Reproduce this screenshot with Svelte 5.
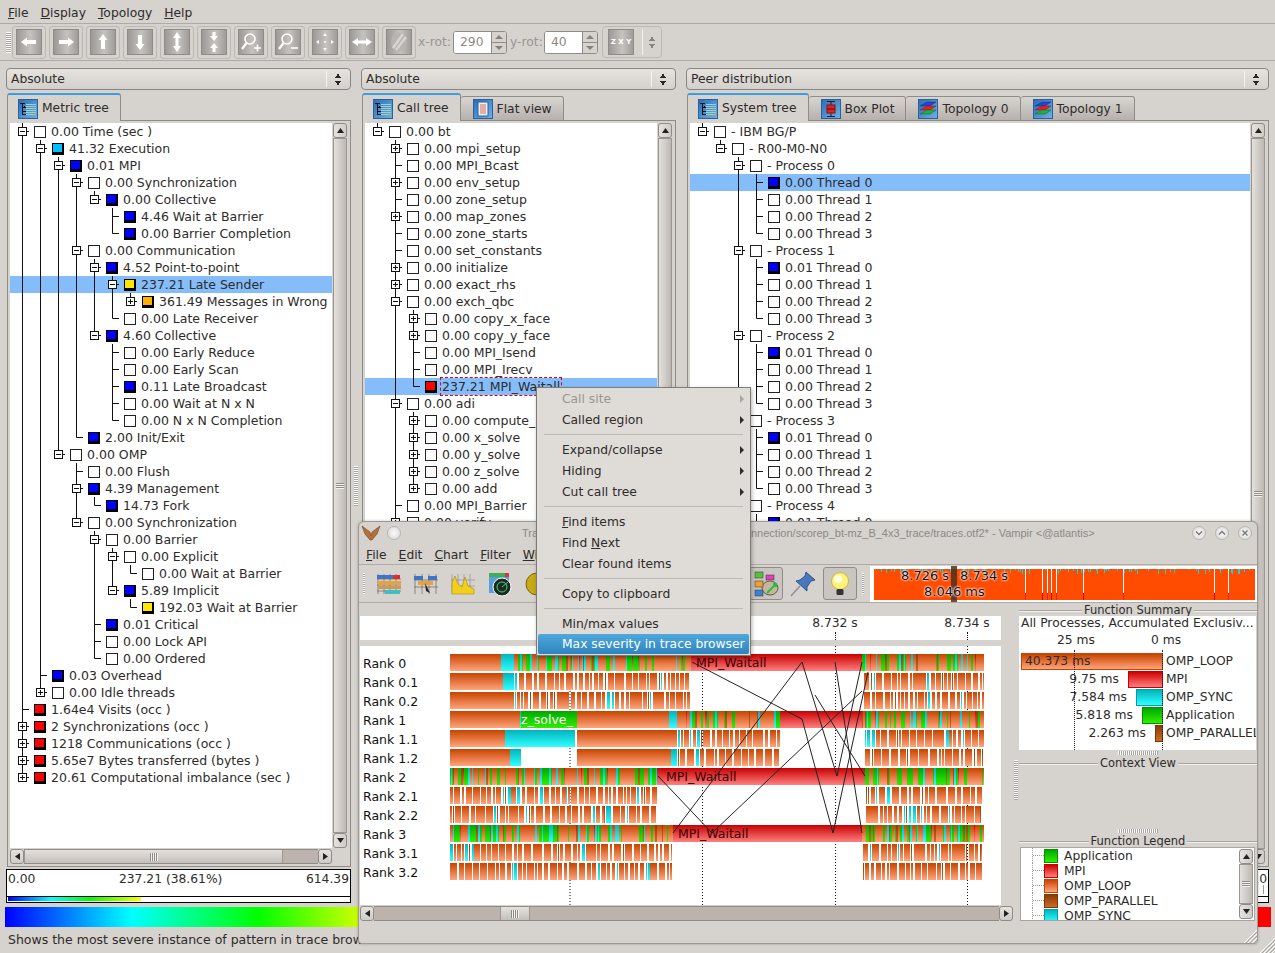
<script>
  const metricTree = [
    [0, "0.00 Time (sec )", "-", ""],
    [1, "41.32 Execution", "-", "#00bfff"],
    [2, "0.01 MPI", "-", "#0000ff"],
    [3, "0.00 Synchronization", "-", ""],
    [4, "0.00 Collective", "-", "#0000ff"],
    [5, "4.46 Wait at Barrier", "", "#0000ff"],
    [5, "0.00 Barrier Completion", "", "#0000ff"],
    [3, "0.00 Communication", "-", ""],
    [4, "4.52 Point-to-point", "-", "#0000ff"],
    [5, "237.21 Late Sender", "-", "#ffe600", "sel"],
    [6, "361.49 Messages in Wrong Order", "+", "#ffb000"],
    [5, "0.00 Late Receiver", "", ""],
    [4, "4.60 Collective", "-", "#0000ff"],
    [5, "0.00 Early Reduce", "", ""],
    [5, "0.00 Early Scan", "", ""],
    [5, "0.11 Late Broadcast", "", "#0000ff"],
    [5, "0.00 Wait at N x N", "", ""],
    [5, "0.00 N x N Completion", "", ""],
    [3, "2.00 Init/Exit", "", "#0000ff"],
    [2, "0.00 OMP", "-", ""],
    [3, "0.00 Flush", "", ""],
    [3, "4.39 Management", "-", "#0000ff"],
    [4, "14.73 Fork", "", "#0000ff"],
    [3, "0.00 Synchronization", "-", ""],
    [4, "0.00 Barrier", "-", ""],
    [5, "0.00 Explicit", "-", ""],
    [6, "0.00 Wait at Barrier", "", ""],
    [5, "5.89 Implicit", "-", "#0000ff"],
    [6, "192.03 Wait at Barrier", "", "#ffe600"],
    [4, "0.01 Critical", "", "#0000ff"],
    [4, "0.00 Lock API", "", ""],
    [4, "0.00 Ordered", "", ""],
    [1, "0.03 Overhead", "", "#0000ff"],
    [1, "0.00 Idle threads", "+", ""],
    [0, "1.64e4 Visits (occ )", "", "#ff0000"],
    [0, "2 Synchronizations (occ )", "+", "#ff0000"],
    [0, "1218 Communications (occ )", "+", "#ff0000"],
    [0, "5.65e7 Bytes transferred (bytes )", "+", "#ff0000"],
    [0, "20.61 Computational imbalance (sec )", "+", "#ff0000"],
  ];

  const callTree = [
    [0, "0.00 bt", "-", ""],
    [1, "0.00 mpi_setup", "+", ""],
    [1, "0.00 MPI_Bcast", "", ""],
    [1, "0.00 env_setup", "+", ""],
    [1, "0.00 zone_setup", "", ""],
    [1, "0.00 map_zones", "+", ""],
    [1, "0.00 zone_starts", "", ""],
    [1, "0.00 set_constants", "", ""],
    [1, "0.00 initialize", "+", ""],
    [1, "0.00 exact_rhs", "+", ""],
    [1, "0.00 exch_qbc", "-", ""],
    [2, "0.00 copy_x_face", "+", ""],
    [2, "0.00 copy_y_face", "+", ""],
    [2, "0.00 MPI_Isend", "", ""],
    [2, "0.00 MPI_Irecv", "", ""],
    [2, "237.21 MPI_Waitall", "", "#ff0000", "sel focus"],
    [1, "0.00 adi", "-", ""],
    [2, "0.00 compute_rhs", "+", ""],
    [2, "0.00 x_solve", "+", ""],
    [2, "0.00 y_solve", "+", ""],
    [2, "0.00 z_solve", "+", ""],
    [2, "0.00 add", "+", ""],
    [1, "0.00 MPI_Barrier", "", ""],
    [1, "0.00 verify", "+", ""],
    [1, "0.00 MPI_Finalize", "", ""],
  ];

  const systemTree = [
    [0, "- IBM BG/P", "-", ""],
    [1, "- R00-M0-N0", "-", ""],
  ];
  for (let p = 0; p < 5; p++) {
    systemTree.push([2, `- Process ${p}`, "-", ""]);
    for (let t = 0; t < 4; t++) {
      const first = t === 0;
      systemTree.push([
        3,
        `${first && p > 0 ? "0.01" : "0.00"} Thread ${t}`,
        "",
        first ? "#0000ff" : "",
        first && p === 0 ? "sel" : "",
      ]);
    }
  }

  // works out which guide lines each row needs from the depth column only
  function layoutTree(list) {
    return list.map(([depth, text, expander, color, flags], i) => {
      const hasSibling = (level) => {
        for (let j = i + 1; j < list.length; j++) {
          if (list[j][0] < level) return false;
          if (list[j][0] === level) return true;
        }
        return false;
      };
      const guides = [];
      for (let k = 0; k < depth; k++) guides.push(hasSibling(k));
      return {
        text,
        expander,
        color,
        guides,
        last: !hasSibling(depth),
        selected: (flags || "").includes("sel"),
        focused: (flags || "").includes("focus"),
      };
    });
  }

  const panels = [
    {
      mode: "Absolute",
      tabs: [["Metric tree", "tree", true]],
      rows: layoutTree(metricTree),
      hbar: true,
      value: ["0.00", "237.21 (38.61%)", "614.39"],
      scale: 133,
    },
    {
      mode: "Absolute",
      tabs: [
        ["Call tree", "tree", true],
        ["Flat view", "flat", false],
      ],
      rows: layoutTree(callTree),
      hbar: false,
      value: ["0.00", "", "614.39"],
      scale: 0,
    },
    {
      mode: "Peer distribution",
      tabs: [
        ["System tree", "tree", true],
        ["Box Plot", "box", false],
        ["Topology 0", "topo", false],
        ["Topology 1", "topo", false],
      ],
      rows: layoutTree(systemTree),
      hbar: false,
      value: ["0.00", "", "0.010"],
      scale: 0,
    },
  ];

  const toolIcons = ["left", "right", "up", "down", "updown", "squeeze", "zoomin", "zoomout", "center", "horiz", "slash"];

  const menuItems = [
    { label: "Call site", arrow: true, disabled: true },
    { label: "Called region", arrow: true },
    null,
    { label: "Expand/collapse", arrow: true },
    { label: "Hiding", arrow: true },
    { label: "Cut call tree", arrow: true },
    null,
    { pre: "", key: "F", post: "ind items" },
    { pre: "Find ", key: "N", post: "ext" },
    { label: "Clear found items" },
    null,
    { label: "Copy to clipboard" },
    null,
    { label: "Min/max values" },
    { label: "Max severity in trace browser", active: true },
  ];

  function makeRng(seed) {
    let s = seed;
    return () => (s = (s * 16807) % 2147483647) / 2147483647;
  }

  function stripes(x0, x1, kind, r) {
    const out = [];
    let x = x0;
    while (x < x1) {
      const p = r();
      let w, fill;
      if (kind === "mix") {
        if (p < 0.38) [w, fill] = [2 + Math.floor(r() * 4), "loop"];
        else if (p < 0.74) [w, fill] = [1 + Math.floor(r() * 2), "app"];
        else if (p < 0.88) [w, fill] = [1 + Math.floor(r() * 2), "sync"];
        else if (p < 0.96) [w, fill] = [1 + Math.floor(r() * 2), "par"];
        else [w, fill] = [1, "mpi"];
      } else {
        if (p < 0.8) [w, fill] = [2 + Math.floor(r() * 6), "loop"];
        else if (p < 0.93) [w, fill] = [1 + Math.floor(r() * 3), "sync"];
        else [w, fill] = [1, "par"];
      }
      w = Math.min(w, x1 - x);
      out.push({ x, w, fill });
      x += w;
      if (kind === "gap" && r() < 0.9) x += 1 + Math.floor(r() * 2);
    }
    return out;
  }

  const rankRows = [
    ["Rank 0", [[450, 501, "loop"], [501, 514, "sync"], [514, 691, "mix"], [691, 862, "mpi"], [862, 984, "mix"]]],
    ["Rank 0.1", [[450, 503, "loop"], [503, 514, "sync"], [515, 690, "gap"], [864, 984, "gap"]]],
    ["Rank 0.2", [[450, 514, "loop"], [515, 690, "gap"], [864, 984, "gap"]]],
    ["Rank 1", [[450, 520, "loop"], [520, 521, "sync"], [521, 577, "app"], [577, 669, "loop"], [669, 677, "sync"], [677, 780, "mix"], [780, 862, "mpi"], [862, 984, "mix"]]],
    ["Rank 1.1", [[450, 505, "loop"], [505, 575, "sync"], [577, 677, "loop"], [678, 780, "gap"], [865, 984, "gap"]]],
    ["Rank 1.2", [[450, 510, "loop"], [510, 521, "sync"], [577, 671, "loop"], [671, 677, "sync"], [678, 780, "gap"], [865, 984, "gap"]]],
    ["Rank 2", [[450, 657, "mix"], [657, 865, "mpi"], [865, 984, "mix"]]],
    ["Rank 2.1", [[450, 657, "gap"], [866, 982, "gap"]]],
    ["Rank 2.2", [[450, 657, "gap"], [866, 982, "gap"]]],
    ["Rank 3", [[450, 673, "mix"], [673, 862, "mpi"], [862, 984, "mix"]]],
    ["Rank 3.1", [[450, 672, "gap"], [863, 982, "gap"]]],
    ["Rank 3.2", [[450, 672, "gap"], [863, 982, "gap"]]],
  ];

  const rng = makeRng(4711);
  const timeline = rankRows.map(([name, runs], i) => {
    const segs = [];
    for (const [a, b, kind] of runs) {
      if (kind === "mix" || kind === "gap") segs.push(...stripes(a, b, kind, rng));
      else segs.push({ x: a, w: b - a, fill: kind });
    }
    return { name, y: 654 + i * 19, segs };
  });

  const barLabels = [
    ["MPI_Waitall", 696, 667],
    ["MPI_Waitall", 666, 781],
    ["MPI_Waitall", 678, 838],
  ];

  const messages = [
    "M692 662 L802 719 L833 833 L868 672",
    "M673 833 L802 662 L837 776 L862 662",
    "M658 776 L712 833 L862 691",
    "M835 662 L862 833",
    "M815 695 L865 776",
  ];

  const ticks = [];
  {
    const r = makeRng(99);
    for (let x = 873; x < 1252; x += 1 + Math.floor(r() * 7)) {
      ticks.push({ x, h: 1 + Math.floor(r() * 5), c: r() < 0.75 ? "#22d0d0" : "#c85a20" });
    }
  }
  const longTicks = [1023, 1040, 1045, 1049, 1054, 1081, 1121, 1212, 1226];

  const summary = [
    { name: "OMP_LOOP", value: "40.373 ms", width: 142, cls: "loop", inside: true },
    { name: "MPI", value: "9.75 ms", width: 35, cls: "mpi" },
    { name: "OMP_SYNC", value: "7.584 ms", width: 27, cls: "sync" },
    { name: "Application", value: "5.818 ms", width: 21, cls: "app" },
    { name: "OMP_PARALLEL", value: "2.263 ms", width: 8, cls: "par" },
  ];

  const legend = [
    ["Application", "app"],
    ["MPI", "mpi"],
    ["OMP_LOOP", "loop"],
    ["OMP_PARALLEL", "par"],
    ["OMP_SYNC", "sync"],
  ];

  const vampirLeft = ["timeline", "process", "counter", "radar", "pie"];
</script>

{#snippet arrowUp()}
  <svg width="9" height="7" viewBox="0 0 9 7"><path d="M4.5 1 L8 6 H1 Z" fill="#222" /></svg>
{/snippet}

{#snippet arrowDown()}
  <svg width="9" height="7" viewBox="0 0 9 7"><path d="M1 1 H8 L4.5 6 Z" fill="#222" /></svg>
{/snippet}

{#snippet vbar()}
  <div class="vbar">
    <div class="sb-btn">{@render arrowUp()}</div>
    <div class="vbar-thumb"><span class="thumb-grip"></span></div>
    <div class="sb-btn">{@render arrowDown()}</div>
  </div>
{/snippet}

{#snippet hbar(before, thumb)}
  <div class="hbar">
    <div class="sb-btn"><svg width="7" height="9" viewBox="0 0 7 9"><path d="M1 4.5 L6 1 V8 Z" fill="#222" /></svg></div>
    <div class="hbar-track">
      <span style="width:{before}px"></span>
      <div class="hbar-thumb" style="width:{thumb}px"><span class="thumb-grip-v"></span></div>
    </div>
    <div class="sb-btn"><svg width="7" height="9" viewBox="0 0 7 9"><path d="M1 1 L6 4.5 L1 8 Z" fill="#222" /></svg></div>
  </div>
{/snippet}

{#snippet tabIcon(kind)}
  <svg class="tab-icon" width="20" height="20" viewBox="0 0 20 20">
    <defs>
      <linearGradient id="tabBlue" x1="0" y1="0" x2="1" y2="1">
        <stop offset="0" stop-color="#2a6db5" />
        <stop offset="1" stop-color="#6db2e4" />
      </linearGradient>
    </defs>
    <rect x="0.5" y="0.5" width="19" height="19" fill="url(#tabBlue)" stroke="#2b5f9e" />
    {#if kind === "tree"}
      <path d="M2 4.5 H6.5 M4.5 4.5 V15.5 H8 M4.5 8.5 H8 M4.5 12.5 H8 M6.5 6.5 V9" stroke="#111" fill="none" shape-rendering="crispEdges" />
      <path d="M8 5.5 H18 M8 7.5 H18 M8 9.5 H18 M8 11.5 H18 M8 13.5 H18 M8 15.5 H15" stroke="#9fd2c4" fill="none" shape-rendering="crispEdges" />
      <path d="M15 15.5 H18" stroke="#e0b040" shape-rendering="crispEdges" />
    {:else if kind === "flat"}
      <rect x="5" y="3" width="10" height="14" fill="#e9f1f8" stroke="#2b5f9e" />
      <path d="M7 6 H13 M7 8 H13 M7 10 H13 M7 12 H13 M7 14 H13" stroke="#e06a50" />
    {:else if kind === "box"}
      <path d="M10 2 V18 M6 2.5 H14 M6 17.5 H14" stroke="#222" />
      <rect x="6" y="6" width="8" height="8" fill="#ee1c1c" stroke="#8a1010" />
      <path d="M6 10 H14" stroke="#222" />
    {:else}
      <path d="M2 7 L9 3 H18 L12 7 Z" fill="#2b3fd0" stroke="#182a80" stroke-width="0.5" />
      <path d="M2 11 L9 7 H18 L12 11 Z" fill="#e22222" stroke="#801818" stroke-width="0.5" />
      <path d="M2 15 L9 11 H18 L12 15 Z" fill="#22b040" stroke="#146020" stroke-width="0.5" />
    {/if}
  </svg>
{/snippet}

{#snippet toolGlyph(kind)}
  <svg width="24" height="24" viewBox="0 0 24 24">
    <g fill="#fff" stroke="none">
      {#if kind === "left"}
        <path d="M4 12 L10 7.5 V10 H19 V14 H10 V16.5 Z" />
      {:else if kind === "right"}
        <path d="M20 12 L14 7.5 V10 H5 V14 H14 V16.5 Z" />
      {:else if kind === "up"}
        <path d="M12 4 L7.5 10 H10 V19 H14 V10 H16.5 Z" />
      {:else if kind === "down"}
        <path d="M12 20 L7.5 14 H10 V5 H14 V14 H16.5 Z" />
      {:else if kind === "updown"}
        <path d="M12 2 L8 8 H10.5 V16 H8 L12 22 L16 16 H13.5 V8 H16 Z" />
      {:else if kind === "squeeze"}
        <path d="M12 11 L8 6 H10.5 V2 H13.5 V6 H16 Z M12 13 L8 18 H10.5 V22 H13.5 V18 H16 Z" />
      {:else if kind === "horiz"}
        <path d="M2 12 L8 8 V10.5 H16 V8 L22 12 L16 16 V13.5 H8 V16 Z" />
      {:else if kind === "center"}
        <path d="M12 3 L14 6 H10 Z M12 21 L14 18 H10 Z M3 12 L6 10 V14 Z M21 12 L18 10 V14 Z" />
        <circle cx="12" cy="12" r="1" />
      {:else if kind === "zoomin" || kind === "zoomout"}
        <circle cx="11" cy="9" r="5" fill="none" stroke="#fff" stroke-width="1.6" />
        <path d="M7.5 13 L3 19" stroke="#fff" stroke-width="2.4" />
        {#if kind === "zoomin"}
          <path d="M15 18 H22 M18.5 14.5 V21.5" stroke="#fff" stroke-width="1.6" />
        {:else}
          <path d="M15 18 H22" stroke="#fff" stroke-width="1.6" />
        {/if}
      {:else}
        <ellipse cx="12" cy="12" rx="8" ry="9.5" fill="#b8b4b0" />
        <path d="M6 18 L16 4 M9 20 L19 7" stroke="#d8d5d2" stroke-width="2.4" />
      {/if}
    </g>
  </svg>
{/snippet}

{#snippet vampirIcon(kind)}
  <svg class="v-icon" width="28" height="28" viewBox="0 0 28 28">
    {#if kind === "timeline"}
      <path d="M3 4 V24 M9 4 V24 M15 4 V24 M21 4 V24 M2 9 H26 M2 15 H26 M2 21 H26" stroke="#555" stroke-width="0.6" />
      <rect x="2" y="5" width="18" height="4" fill="#3f74c8" /><rect x="18" y="5" width="7" height="4" fill="#e02c2c" />
      <rect x="3" y="11" width="23" height="4" fill="#e8a23c" /><rect x="3" y="16" width="23" height="3" fill="#c89a60" />
      <rect x="10" y="20" width="15" height="4" fill="#3ec0c0" />
    {:else if kind === "process"}
      <path d="M3 4 V24 M10 4 V24 M17 4 V24 M24 4 V24 M2 10 H26 M2 17 H26" stroke="#555" stroke-width="0.6" />
      <rect x="2" y="6" width="9" height="4" fill="#3f74c8" /><rect x="16" y="6" width="9" height="4" fill="#3f74c8" />
      <rect x="6" y="11" width="15" height="4" fill="#e8a23c" />
      <path d="M13 13 L18 23 L14 21 Z" fill="#222" />
    {:else if kind === "counter"}
      <path d="M3 4 V24 M9 4 V24 M15 4 V24 M21 4 V24 M2 10 H26 M2 16 H26" stroke="#888" stroke-width="0.6" />
      <path d="M3 24 V13 L6 6 L9 14 L13 17 L16 7 L19 16 L25 19 V24 Z" fill="#f2cf1e" stroke="#a58a10" stroke-width="0.6" />
    {:else if kind === "radar"}
      <rect x="3" y="3" width="20" height="20" fill="#5aa0d8" />
      <rect x="3" y="3" width="20" height="4" fill="#3fae55" /><rect x="19" y="3" width="4" height="4" fill="#d83838" />
      <circle cx="16" cy="17" r="9" fill="#1b2b22" stroke="#fff" />
      <circle cx="16" cy="17" r="5" fill="none" stroke="#4fd07a" />
      <path d="M16 17 L22 12" stroke="#4fd07a" />
    {:else if kind === "pie"}
      <circle cx="14" cy="14" r="11" fill="#c8a818" stroke="#7a6410" />
      <path d="M14 14 L14 4 A10 10 0 0 1 22 9 Z" fill="#2a2a10" />
    {:else if kind === "palette"}
      <ellipse cx="18" cy="18" rx="8" ry="7" fill="#c7b79a" stroke="#6a5c44" />
      <rect x="3" y="2" width="8" height="6" fill="#54c23e" stroke="#333" stroke-width="0.5" />
      <rect x="14" y="5" width="8" height="5" fill="#e040c0" stroke="#333" stroke-width="0.5" />
      <rect x="3" y="11" width="8" height="6" fill="#f0a030" stroke="#333" stroke-width="0.5" />
      <rect x="3" y="20" width="8" height="6" fill="#3f80d0" stroke="#333" stroke-width="0.5" />
      <path d="M15 23 L24 14 M21 14 H24 V17" stroke="#22c040" stroke-width="2" fill="none" />
    {:else if kind === "pin"}
      <path d="M17 2 L26 10 L22 11 L18 17 L18 21 L7 11 L11 10 L16 6 Z" fill="#4a78c0" stroke="#23406e" stroke-width="0.8" />
      <path d="M11 16 L2 26" stroke="#8a8f98" stroke-width="1.4" />
    {:else}
      <circle cx="14" cy="11" r="8.5" fill="#fff27a" stroke="#c8b840" />
      <circle cx="12" cy="9" r="4" fill="#fffde0" />
      <rect x="10.5" y="19" width="7" height="6" rx="1.5" fill="#333" />
    {/if}
  </svg>
{/snippet}

{#snippet treeRow(row)}
  <div class="row" class:selected={row.selected}>
    {#each row.guides as on}
      <span class="guide" class:on></span>
    {/each}
    <svg class="elbow" width="18" height="17" viewBox="0 0 18 17">
      <path d={row.last ? "M9.5 0 V8.5 H16" : "M9.5 0 V17 M9.5 8.5 H16"} stroke="#111" fill="none" />
      {#if row.expander}
        <rect x="5.5" y="4.5" width="8" height="8" fill="#fff" stroke="#111" />
        <path d={row.expander === "+" ? "M7 8.5 H12 M9.5 6 V11" : "M7 8.5 H12"} stroke="#111" />
      {/if}
    </svg>
    <span class="swatch" class:filled={row.color} style:--fill={row.color || "#fff"}></span>
    <span class="label" class:focused={row.focused}>{row.text}</span>
  </div>
{/snippet}

<div class="app">
  <nav class="menubar">
    <span><u>F</u>ile</span>
    <span><u>D</u>isplay</span>
    <span><u>T</u>opology</span>
    <span><u>H</u>elp</span>
  </nav>

  <div class="toolbar">
    <span class="grip-v"></span>
    <div class="tools">
      {#each toolIcons as kind}
        <button type="button" class="tool"><span class="face">{@render toolGlyph(kind)}</span></button>
      {/each}
    </div>
    <label class="rot" for="xrot">x-rot:</label>
    <div class="spin">
      <input id="xrot" value="290" />
      <div class="spin-btns"><span class="up"></span><span class="down"></span></div>
    </div>
    <label class="rot rot-y" for="yrot">y-rot:</label>
    <div class="spin">
      <input id="yrot" value="40" />
      <div class="spin-btns"><span class="up"></span><span class="down"></span></div>
    </div>
    <div class="zxy">
      <span class="face zxy-face">Z X Y</span>
      <span class="zxy-div"></span>
      <span class="stack gray"></span>
    </div>
  </div>

  <main class="panels">
    {#each panels as panel, i}
      {#if i > 0}
        <div class="splitter"><span class="grip-v"></span></div>
      {/if}
      <section class="panel">
        <div class="combo">
          <span class="combo-text">{panel.mode}</span>
          <span class="combo-div"></span>
          <span class="stack"></span>
        </div>
        <div class="tabs">
          {#each panel.tabs as [name, kind, active]}
            <div class="tab" class:active>
              {@render tabIcon(kind)}
              <span>{name}</span>
            </div>
          {/each}
        </div>
        <div class="frame">
          <div class="tree-wrap">
            <div class="tree">
              {#each panel.rows as row}
                {@render treeRow(row)}
              {/each}
            </div>
            {@render vbar()}
          </div>
          {#if panel.hbar}
            <div class="frame-hbar">{@render hbar(0, 259)}</div>
          {/if}
        </div>
        <div class="value-box">
          <div class="value-text">
            <span>{panel.value[0]}</span>
            <span>{panel.value[1]}</span>
            <span>{panel.value[2]}</span>
          </div>
          {#if i === 2}<span class="value-mark"></span>{/if}
          <div class="value-scale">
            {#if panel.scale}<span style="width:{panel.scale}px"></span>{/if}
          </div>
        </div>
      </section>
    {/each}
  </main>

  <div class="spectrum"></div>
  <footer class="status">Shows the most severe instance of pattern in trace browser</footer>
  <svg class="size-grip outer" width="16" height="16" viewBox="0 0 16 16">
    <path d="M16 1 L1 16 M16 5 L5 16 M16 9 L9 16 M16 13 L13 16" stroke="#fff" />
    <path d="M16 3 L3 16 M16 7 L7 16 M16 11 L11 16" stroke="#a8a4a0" />
  </svg>

  <!-- second application window lying over the first one -->
  <div class="vampir">
    <header class="v-title">
      <svg class="v-logo" width="20" height="16" viewBox="0 0 20 16">
        <path d="M1 1 L9 7 L10 11 L11 7 L19 1 L16 9 L11 15 H9 L4 9 Z" fill="#b5703a" stroke="#6e4526" stroke-width="0.6" />
      </svg>
      <span class="v-circle"></span>
      <span class="v-head">Trace View</span>
      <span class="v-tail">nnection/scorep_bt-mz_B_4x3_trace/traces.otf2* - Vampir &lt;@atlantis&gt;</span>
      <span class="v-winbtns">
        <span class="v-circle"><svg width="10" height="10" viewBox="0 0 10 10"><path d="M2 3.5 L5 6.5 L8 3.5" stroke="#777" stroke-width="1.4" fill="none" /></svg></span>
        <span class="v-circle"><svg width="10" height="10" viewBox="0 0 10 10"><path d="M2 6.5 L5 3.5 L8 6.5" stroke="#777" stroke-width="1.4" fill="none" /></svg></span>
        <span class="v-circle"><svg width="10" height="10" viewBox="0 0 10 10"><path d="M2.5 2.5 L7.5 7.5 M7.5 2.5 L2.5 7.5" stroke="#777" stroke-width="1.4" fill="none" /></svg></span>
      </span>
    </header>
    <nav class="v-menu">
      <span><u>F</u>ile</span>
      <span><u>E</u>dit</span>
      <span><u>C</u>hart</span>
      <span><u>F</u>ilter</span>
      <span><u>W</u>indow</span>
      <span><u>H</u>elp</span>
    </nav>
    <div class="v-toolbar">
      <span class="grip-v"></span>
      <div class="v-tools">
        {#each vampirLeft as kind}
          {@render vampirIcon(kind)}
        {/each}
      </div>
      <div class="v-tools-right">
        <span class="pressed">{@render vampirIcon("palette")}</span>
        <span class="plain">{@render vampirIcon("pin")}</span>
        <span class="pressed">{@render vampirIcon("bulb")}</span>
      </div>
      <span class="grip-v v-grip"></span>
      <div class="mini">
        <svg width="387" height="36" viewBox="868 568 387 36">
          <rect x="872" y="571" width="381" height="31" fill="#ff4c00" />
          {#each ticks as t}
            <rect x={t.x} y="571" width="1" height={t.h} fill={t.c} />
          {/each}
          {#each longTicks as x, i}
            <rect x={x} y="571" width="1" height="24" fill="#fff" />
            <rect x={x} y="595" width="1" height="7" fill={i % 2 ? "#e00000" : "#f02020"} />
          {/each}
          <rect x="949" y="568" width="6" height="36" fill="#503020" opacity="0.85" />
        </svg>
        <span class="mini-a">8.726 s</span>
        <span class="mini-b">8.734 s</span>
        <span class="mini-c">8.046 ms</span>
      </div>
    </div>

    <div class="v-body">
      <div class="chart">
        <div class="ruler">
          <span class="rlabel r1">8.732 s</span>
          <span class="rlabel r2">8.734 s</span>
          <span class="rdots d1"></span>
          <span class="rdots d2"></span>
        </div>
        <svg class="timeline" width="641" height="259" viewBox="360 646 641 259">
          <defs>
            <linearGradient id="g-loop" x1="0" y1="0" x2="0" y2="1"><stop offset="0" stop-color="#c84400" /><stop offset="1" stop-color="#ffa47c" /></linearGradient>
            <linearGradient id="g-mpi" x1="0" y1="0" x2="0" y2="1"><stop offset="0" stop-color="#c80000" /><stop offset="1" stop-color="#ff8080" /></linearGradient>
            <linearGradient id="g-sync" x1="0" y1="0" x2="0" y2="1"><stop offset="0" stop-color="#00b4bc" /><stop offset="1" stop-color="#30ffff" /></linearGradient>
            <linearGradient id="g-app" x1="0" y1="0" x2="0" y2="1"><stop offset="0" stop-color="#00a800" /><stop offset="1" stop-color="#30ee00" /></linearGradient>
            <linearGradient id="g-par" x1="0" y1="0" x2="0" y2="1"><stop offset="0" stop-color="#8a3c08" /><stop offset="1" stop-color="#d06a20" /></linearGradient>
          </defs>
          {#each [570, 702.5, 835.5, 967.5] as x}
            <path d="M{x} 646 V905" stroke="#111" stroke-dasharray="1 2" />
          {/each}
          {#each timeline as rank}
            <text class="rank" x="363" y={rank.y + 14}>{rank.name}</text>
            {#each rank.segs as s}
              <rect x={s.x} y={rank.y} width={s.w} height="17" fill="url(#g-{s.fill})" shape-rendering="crispEdges" />
            {/each}
          {/each}
          {#each barLabels as [text, x, y]}
            <text class="rank dark" x={x} y={y}>{text}</text>
          {/each}
          <text class="rank light" x="521" y="724">z_solve_</text>
          {#each messages as d}
            <path {d} fill="none" stroke="#222" />
          {/each}
        </svg>
        <div class="chart-hbar">{@render hbar(126, 30)}</div>
      </div>

      <span class="dock-grip"><span class="grip-v"></span></span>

      <aside class="side">
        <div class="group-title"><span>Function Summary</span></div>
        <div class="summary">
          <div class="sum-head">All Processes, Accumulated Exclusiv...</div>
          <div class="sum-axis"><span>25 ms</span><span>0 ms</span></div>
          {#each summary as s}
            <div class="sum-row">
              <div class="sum-zone">
                {#if s.inside}
                  <div class="bar {s.cls}" style="width:{s.width}px">{s.value}</div>
                {:else}
                  <span>{s.value}</span>
                  <div class="bar {s.cls}" style="width:{s.width}px"></div>
                {/if}
              </div>
              <span class="sum-name">{s.name}</span>
            </div>
          {/each}
          <span class="axis-line a"></span>
          <span class="axis-line b"></span>
        </div>
        <div class="side-grip"><span class="grip-h"></span></div>
        <div class="group-title"><span>Context View</span></div>
        <div class="context"></div>
        <div class="side-grip"><span class="grip-h"></span></div>
        <div class="group-title"><span>Function Legend</span></div>
        <div class="legend">
          <div class="legend-list">
            {#each legend as [name, cls]}
              <div class="legend-row">
                <span class="legend-dots"></span>
                <span class="chip bar {cls}"></span>
                <span>{name}</span>
              </div>
            {/each}
          </div>
          <div class="legend-bar">{@render vbar()}</div>
        </div>
      </aside>
    </div>
    <svg class="size-grip" width="14" height="14" viewBox="0 0 14 14">
      <path d="M14 1 L1 14 M14 5 L5 14 M14 9 L9 14" stroke="#fff" />
      <path d="M14 3 L3 14 M14 7 L7 14 M14 11 L11 14" stroke="#a8a4a0" />
    </svg>
  </div>

  <div class="context-menu">
    {#each menuItems as item}
      {#if item === null}
        <div class="sep"></div>
      {:else}
        <div class="item" class:disabled={item.disabled} class:active={item.active}>
          {#if item.label}
            <span>{item.label}</span>
          {:else}
            <span>{item.pre}<u>{item.key}</u>{item.post}</span>
          {/if}
          {#if item.arrow}<span class="tri"></span>{/if}
        </div>
      {/if}
    {/each}
  </div>
</div>

<style>
  :global(body) {
    margin: 0;
    background: #d6d2ce;
  }

  .app {
    position: relative;
    width: 1275px;
    height: 953px;
    overflow: hidden;
    display: flex;
    flex-direction: column;
    background: #d6d2ce;
    font-family: "DejaVu Sans", sans-serif;
    font-size: 12.3px;
    color: #2e2c2a;
  }

  .menubar {
    box-sizing: border-box;
    height: 24px;
    border-bottom: 1px solid #aeaaa6;
    display: flex;
    align-items: center;
    gap: 12px;
    padding: 3px 0 0 8px;
    flex-shrink: 0;
  }

  .toolbar {
    height: 36px;
    border-bottom: 1px solid #aeaaa6;
    display: flex;
    align-items: center;
    padding-left: 6px;
    flex-shrink: 0;
  }

  .grip-v {
    display: block;
    width: 5px;
    height: 21px;
    background: repeating-linear-gradient(to bottom, #fff 0 1px, #a8a4a0 1px 2px);
  }

  .tools {
    display: flex;
    gap: 3px;
    margin-left: 1px;
  }

  .tool {
    width: 34px;
    height: 33px;
    padding: 0;
    border: 1px solid #bcb8b3;
    border-radius: 3px;
    background: #d6d2ce;
    display: flex;
    align-items: center;
    justify-content: center;
  }

  .face {
    width: 24px;
    height: 24px;
    display: flex;
    align-items: center;
    justify-content: center;
    border: 1px solid #8f8b88;
    background: linear-gradient(to right, #9c9895, #c6c3bf 55%, #a09c99);
  }

  .rot {
    color: #9a9692;
    margin-left: 2px;
    width: 35px;
    white-space: nowrap;
  }

  .rot-y {
    margin-left: 3px;
    width: 34px;
  }

  .spin {
    display: flex;
    box-sizing: border-box;
    width: 54px;
    height: 23px;
    border: 1px solid #8f8b88;
    border-radius: 3px;
    background: #fff;
    overflow: hidden;
    flex-shrink: 0;
  }

  .spin input {
    flex: 1;
    min-width: 0;
    width: 38px;
    box-sizing: border-box;
    border: 0;
    outline: 0;
    padding: 0 0 0 6px;
    font: inherit;
    color: #8c8884;
    background: #fff;
  }

  .spin-btns {
    width: 14px;
    display: flex;
    flex-direction: column;
    border-left: 1px solid #8f8b88;
    background: #d6d2ce;
  }

  .spin-btns span {
    flex: 1;
    position: relative;
  }

  .spin-btns .up {
    border-bottom: 1px solid #8f8b88;
  }

  .spin-btns span::after {
    content: "";
    position: absolute;
    left: 3px;
    top: 3px;
    border-left: 4px solid transparent;
    border-right: 4px solid transparent;
  }

  .spin-btns .up::after {
    border-bottom: 4px solid #85817d;
  }

  .spin-btns .down::after {
    border-top: 4px solid #85817d;
  }

  .zxy {
    margin-left: 4px;
    width: 60px;
    height: 32px;
    border: 1px solid #bcb8b3;
    border-radius: 4px;
    display: flex;
    align-items: center;
    padding-left: 5px;
    box-sizing: border-box;
  }

  .zxy-face {
    font-size: 7px;
    font-weight: bold;
    color: #fff;
  }

  .zxy-div {
    width: 1px;
    height: 26px;
    background: #f2f0ee;
    margin: 0 5px 0 8px;
  }

  .stack {
    display: block;
    width: 8px;
    height: 13px;
    background:
      conic-gradient(from 150deg at 50% 0, #2a2826 60deg, transparent 0) top/8px 5px no-repeat,
      conic-gradient(from -30deg at 50% 100%, #2a2826 60deg, transparent 0) bottom/8px 5px no-repeat;
  }

  .stack.gray {
    filter: opacity(0.45);
  }

  .panels {
    flex: 1;
    min-height: 0;
    display: grid;
    grid-template-columns: 345px 10px 315px 10px 583px;
    padding: 7px 0 0 6px;
  }

  .splitter {
    display: flex;
    align-items: center;
    justify-content: center;
  }

  .splitter .grip-v {
    width: 4px;
    height: 40px;
  }

  .panel {
    display: flex;
    flex-direction: column;
    min-width: 0;
    min-height: 0;
  }

  .combo {
    height: 22px;
    box-sizing: border-box;
    flex-shrink: 0;
    display: flex;
    align-items: center;
    border: 1px solid #8a8683;
    border-radius: 4px;
    background: linear-gradient(to bottom, #e6e3df, #d4d0cc);
    padding: 0 8px 0 4px;
  }

  .combo-text {
    flex: 1;
  }

  .combo-div {
    width: 1px;
    height: 16px;
    background: #f6f4f2;
    margin-right: 7px;
  }

  .tabs {
    display: flex;
    align-items: flex-end;
    margin: 3px 0 -1px 1px;
    height: 28px;
    flex-shrink: 0;
    position: relative;
    z-index: 1;
  }

  .tab {
    box-sizing: border-box;
    height: 25px;
    display: flex;
    align-items: center;
    gap: 4px;
    padding: 0 11px 0 12px;
    border: 1px solid #8f8b87;
    border-left-width: 0;
    border-radius: 3px 3px 0 0;
    background: linear-gradient(to bottom, #d8d4d0, #b6b1ac);
  }

  .tab.active {
    height: 28px;
    padding: 0 11px 0 10px;
    border-width: 2px 1px 0 1px;
    border-top-color: #3c9de0;
    background: #d6d2ce;
  }

  .tab-icon {
    flex-shrink: 0;
    margin-top: 1px;
  }

  .frame {
    flex: 1;
    min-height: 0;
    margin: 0 0 2px 1px;
    border: 1px solid #8f8b87;
    padding: 2px 3px 2px 2px;
    display: flex;
    flex-direction: column;
  }

  .tree-wrap {
    flex: 1;
    min-height: 0;
    display: flex;
  }

  .tree {
    flex: 1;
    min-width: 0;
    background: #fff;
    overflow: hidden;
    padding-left: 3px;
    font-size: 12.5px;
  }

  .row {
    height: 17px;
    display: flex;
    align-items: center;
    white-space: nowrap;
    margin-left: -3px;
    padding-left: 3px;
  }

  .row.selected {
    background: #85bdfb;
  }

  .guide {
    width: 18px;
    height: 17px;
    flex-shrink: 0;
  }

  .guide.on {
    background: linear-gradient(#111, #111) no-repeat 9px 0 / 1px 100%;
  }

  .elbow {
    flex-shrink: 0;
  }

  .swatch {
    box-sizing: border-box;
    width: 12px;
    height: 12px;
    flex-shrink: 0;
    margin: 0 5px 0 3px;
    border: 1px solid #222;
    background: var(--fill);
  }

  .swatch.filled {
    border-width: 1px 2px 3px 1px;
    border-color: #000;
  }

  .label {
    line-height: 15px;
  }

  .label.focused {
    outline: 1px dashed #d8000c;
    outline-offset: 1px;
  }

  .vbar {
    width: 14px;
    flex-shrink: 0;
    margin-left: 1px;
    display: flex;
    flex-direction: column;
    height: 100%;
  }

  .sb-btn {
    flex-shrink: 0;
    box-sizing: border-box;
    width: 14px;
    height: 15px;
    border: 1px solid #8f8b87;
    border-radius: 3px;
    background: linear-gradient(to right, #e6e3df, #cfcbc7);
    display: flex;
    align-items: center;
    justify-content: center;
  }

  .vbar-thumb {
    flex: 1;
    min-height: 0;
    box-sizing: border-box;
    border: 1px solid #9a9692;
    background: linear-gradient(to right, #e4e1dd, #bdb8b3);
    display: flex;
    align-items: center;
    justify-content: center;
  }

  .thumb-grip {
    width: 8px;
    height: 6px;
    background: repeating-linear-gradient(to bottom, #8f8b87 0 1px, #f4f2f0 1px 2px);
  }

  .thumb-grip-v {
    width: 8px;
    height: 8px;
    background: repeating-linear-gradient(to right, #8f8b87 0 1px, #f4f2f0 1px 2px);
  }

  .frame-hbar {
    margin-top: 1px;
    margin-right: 15px;
    flex-shrink: 0;
  }

  .hbar {
    height: 15px;
    display: flex;
  }

  .hbar .sb-btn {
    background: linear-gradient(to bottom, #e6e3df, #cfcbc7);
  }

  .hbar-track {
    flex: 1;
    display: flex;
    background: #bdb3ad;
    border-top: 1px solid #8f8b87;
    border-bottom: 1px solid #8f8b87;
  }

  .hbar-thumb {
    box-sizing: border-box;
    height: 100%;
    border: 1px solid #9a9692;
    border-width: 0 1px;
    background: linear-gradient(to bottom, #e4e1dd, #c4bfba);
    display: flex;
    align-items: center;
    justify-content: center;
  }

  .value-box {
    position: relative;
    height: 34px;
    box-sizing: border-box;
    flex-shrink: 0;
    background: #fff;
    border: 1px solid #000;
    display: flex;
    flex-direction: column;
  }

  .value-text {
    flex: 1;
    display: flex;
    justify-content: space-between;
    padding: 1px 1px 0 1px;
    line-height: 16px;
  }

  .value-mark {
    position: absolute;
    right: 4px;
    top: 15px;
    width: 1px;
    height: 9px;
    background: #999;
  }

  .value-scale {
    height: 5px;
    border-top: 1px solid #000;
    padding: 0 0 0 1px;
  }

  .value-scale span {
    display: block;
    height: 4px;
    background: linear-gradient(to right, #0000ff, #00ffff 32%, #00ff00 62%, #ffff00);
  }

  .spectrum {
    height: 20px;
    margin: 4px 4px 0 5px;
    flex-shrink: 0;
    background: linear-gradient(to right, #0000ff, #00ffff 10%, #00ff00 20%, #ffff00 30%, #ff0000 99.2%);
  }

  .status {
    height: 26px;
    box-sizing: border-box;
    flex-shrink: 0;
    padding: 0 0 1px 8px;
    font-size: 12.5px;
    display: flex;
    align-items: center;
    white-space: nowrap;
  }

  .size-grip {
    position: absolute;
    right: 0;
    bottom: 0;
  }

  .vampir {
    position: absolute;
    left: 358px;
    top: 521px;
    width: 900px;
    height: 423px;
    box-sizing: border-box;
    background: #d6d2ce;
    border: 1px solid #9c9996;
    border-radius: 6px 6px 4px 4px;
    display: flex;
    flex-direction: column;
    box-shadow: 0 0 3px rgba(0, 0, 0, 0.25);
  }

  .v-title {
    height: 21px;
    flex-shrink: 0;
    display: flex;
    align-items: center;
    font-family: "Liberation Sans", sans-serif;
    font-size: 11px;
    color: #8c8986;
  }

  .v-logo {
    margin: 0 2px 0 2px;
  }

  .v-circle {
    width: 14px;
    height: 14px;
    box-sizing: border-box;
    border-radius: 50%;
    border: 1px solid #b8b5b2;
    background: radial-gradient(circle, #fafafa, #d8d5d2);
    display: flex;
    align-items: center;
    justify-content: center;
    flex-shrink: 0;
  }

  .v-title > .v-circle {
    margin-left: 4px;
  }

  .v-head {
    margin-left: 121px;
    width: 229px;
    flex-shrink: 0;
    overflow: hidden;
    white-space: nowrap;
  }

  .v-tail {
    white-space: nowrap;
    flex: 1;
  }

  .v-winbtns {
    display: flex;
    gap: 9px;
    margin-right: 5px;
  }

  .v-menu {
    height: 22px;
    box-sizing: border-box;
    flex-shrink: 0;
    display: flex;
    align-items: center;
    gap: 12px;
    padding: 2px 0 0 7px;
    border-bottom: 1px solid #aeaaa6;
  }

  .v-toolbar {
    height: 37px;
    flex-shrink: 0;
    display: flex;
    align-items: center;
    border-bottom: 1px solid #aeaaa6;
    padding-left: 4px;
  }

  .v-tools {
    display: flex;
    gap: 9px;
    margin-left: 10px;
    width: 378px;
    flex-shrink: 0;
  }

  .v-tools-right {
    margin-left: -4px;
    display: flex;
    gap: 3px;
    align-items: center;
  }

  .pressed,
  .plain {
    box-sizing: border-box;
    width: 34px;
    height: 33px;
    display: flex;
    align-items: center;
    justify-content: center;
    border: 1px solid transparent;
    border-radius: 3px;
  }

  .pressed {
    border-color: #8f8b87;
    background: #c9c5c1;
  }

  .v-grip {
    margin-left: 5px;
    width: 4px;
  }

  .mini {
    position: relative;
    margin-left: 6px;
    width: 387px;
    height: 36px;
    background: #fff;
    flex-shrink: 0;
  }

  .mini svg {
    display: block;
  }

  .mini span {
    position: absolute;
    font-size: 13px;
    color: #111;
    white-space: nowrap;
    text-shadow: 0 0 2px #fff, 0 0 2px #fff, 0 0 3px #ffb090;
  }

  .mini-a {
    left: 31px;
    top: 2px;
  }

  .mini-b {
    left: 90px;
    top: 2px;
  }

  .mini-c {
    left: 54px;
    top: 18px;
  }

  .v-body {
    flex: 1;
    min-height: 0;
    display: flex;
    padding: 13px 0 0 1px;
  }

  .chart {
    width: 653px;
    flex-shrink: 0;
    display: flex;
    flex-direction: column;
  }

  .ruler {
    position: relative;
    width: 641px;
    height: 24px;
    background: #fff;
    flex-shrink: 0;
  }

  .rlabel {
    position: absolute;
    top: 0;
    transform: translateX(-50%);
    white-space: nowrap;
  }

  .r1 {
    left: 475px;
  }

  .r2 {
    left: 607px;
  }

  .rdots {
    position: absolute;
    top: 16px;
    bottom: 0;
    border-left: 1px dotted #111;
  }

  .d1 {
    left: 475px;
  }

  .d2 {
    left: 607px;
  }

  .timeline {
    margin-top: 6px;
    background: #fff;
    flex-shrink: 0;
    display: block;
  }

  .rank {
    font-family: "DejaVu Sans", sans-serif;
    font-size: 12.5px;
    fill: #111;
  }

  .rank.dark {
    fill: #3a0000;
  }

  .rank.light {
    fill: #fff;
  }

  .chart-hbar {
    margin-top: 1px;
  }

  .dock-grip {
    width: 6px;
    display: flex;
    align-items: center;
    justify-content: center;
    flex-shrink: 0;
  }

  .dock-grip .grip-v {
    width: 4px;
    height: 40px;
  }

  .side {
    flex: 1;
    min-width: 0;
    display: flex;
    flex-direction: column;
    margin-top: -13px;
  }

  .group-title {
    height: 12px;
    margin-top: 1px;
    display: flex;
    align-items: center;
    gap: 2px;
    font-size: 11.5px;
    flex-shrink: 0;
    white-space: nowrap;
  }

  .group-title::before,
  .group-title::after {
    content: "";
    flex: 1;
    height: 1px;
    background: #a8a4a0;
    box-shadow: 0 1px 0 #f2f0ee;
  }

  .summary {
    position: relative;
    height: 134px;
    background: #fff;
    overflow: hidden;
    flex-shrink: 0;
    margin-right: 1px;
  }

  .sum-head {
    padding-left: 2px;
    line-height: 15px;
    white-space: nowrap;
  }

  .sum-axis {
    height: 18px;
    margin-bottom: 3px;
    display: flex;
    gap: 56px;
    padding-left: 38px;
    align-items: center;
  }

  .sum-row {
    height: 18px;
    display: flex;
    align-items: center;
  }

  .sum-zone {
    width: 144px;
    flex-shrink: 0;
    display: flex;
    justify-content: flex-end;
    align-items: center;
    gap: 9px;
    white-space: nowrap;
  }

  .sum-name {
    margin-left: 3px;
    white-space: nowrap;
  }

  .bar {
    height: 17px;
    box-sizing: border-box;
    border: 1px solid #c84400;
    background: linear-gradient(to bottom, #c84400, #ffa47c);
    padding-left: 3px;
    line-height: 15px;
    flex-shrink: 0;
  }

  .bar.mpi {
    border-color: #c80000;
    background: linear-gradient(to bottom, #d00000, #ff8080);
  }

  .bar.sync {
    border-color: #00a0a8;
    background: linear-gradient(to bottom, #00b4bc, #30ffff);
  }

  .bar.app {
    border-color: #009000;
    background: linear-gradient(to bottom, #00a800, #30ee00);
  }

  .bar.par {
    border-color: #7a3808;
    background: linear-gradient(to bottom, #8a3c08, #d06a20);
  }

  .axis-line {
    position: absolute;
    top: 34px;
    bottom: 0;
    border-left: 1px dotted #222;
  }

  .axis-line.a {
    left: 55px;
  }

  .axis-line.b {
    left: 143px;
  }

  .side-grip {
    height: 5px;
    margin-top: 1px;
    display: flex;
    justify-content: center;
    flex-shrink: 0;
  }

  .grip-h {
    width: 40px;
    height: 4px;
    background: repeating-linear-gradient(to right, #fff 0 1px, #a8a4a0 1px 2px);
  }

  .context {
    height: 59px;
    flex-shrink: 0;
  }

  .legend {
    margin: 0 2px 0 1px;
    height: 74px;
    box-sizing: border-box;
    border: 1px solid #a8a4a0;
    background: #fff;
    display: flex;
    flex-shrink: 0;
  }

  .legend-list {
    flex: 1;
    overflow: hidden;
  }

  .legend-row {
    height: 15px;
    display: flex;
    align-items: center;
    white-space: nowrap;
  }

  .legend-dots {
    width: 12px;
    height: 15px;
    margin-left: 11px;
    border-left: 1px dotted #999;
    background: linear-gradient(to right, #999 50%, transparent 0) 0 7px / 2px 1px repeat-x;
    flex-shrink: 0;
    box-sizing: border-box;
  }

  .chip {
    width: 14px;
    height: 14px;
    padding: 0;
    margin-right: 6px;
  }

  .legend-bar {
    margin: 1px 1px 1px 0;
  }

  .legend-bar .vbar {
    margin-left: 0;
  }

  .context-menu {
    position: absolute;
    left: 536px;
    top: 387px;
    width: 215px;
    height: 269px;
    box-sizing: border-box;
    border: 1px solid #7f7b77;
    background: #dfdbd7;
    box-shadow: 1px 2px 4px rgba(0, 0, 0, 0.3);
    padding: 0 1px;
  }

  .item {
    height: 21px;
    display: flex;
    align-items: center;
    padding: 0 5px 0 24px;
    justify-content: space-between;
    white-space: nowrap;
  }

  .item.disabled {
    color: #9a9693;
  }

  .item.active {
    color: #fff;
    height: 20px;
    border-radius: 2px;
    background: linear-gradient(to bottom, #4ea8dc, #2f84be);
  }

  .sep {
    height: 9px;
    position: relative;
  }

  .sep::before {
    content: "";
    position: absolute;
    left: 6px;
    right: 6px;
    top: 4px;
    height: 1px;
    background: #bdb9b5;
  }

  .tri {
    width: 0;
    height: 0;
    border-left: 4px solid #2e2c2a;
    border-top: 4px solid transparent;
    border-bottom: 4px solid transparent;
  }

  .item.disabled .tri {
    border-left-color: #a8a4a0;
  }
</style>
